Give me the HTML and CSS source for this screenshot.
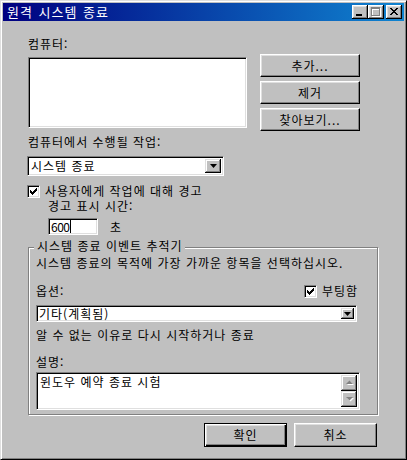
FILE: index.html
```html
<!DOCTYPE html>
<html lang="ko">
  <head>
    <meta charset="UTF-8" />
    <title>원격 시스템 종료</title>
    <link rel="stylesheet" href="styles.css">
  </head>
  <body>
    <div class="window">
      <div class="titlebar">
        <span class="title">원격 시스템 종료</span>
        <div class="caption-buttons">
          <span class="cap-btn">
            <svg width="16" height="14" viewBox="0 0 16 14" shape-rendering="crispEdges">
              <rect x="4" y="9" width="6" height="2" fill="#000" />
            </svg>
          </span>
          <span class="cap-btn">
            <svg width="16" height="14" viewBox="0 0 16 14" shape-rendering="crispEdges">
              <g fill="#fff">
                <rect x="4" y="3" width="9" height="2" />
                <rect x="4" y="3" width="1" height="9" />
                <rect x="12" y="3" width="1" height="9" />
                <rect x="4" y="11" width="9" height="1" />
              </g>
              <g fill="#808080">
                <rect x="3" y="2" width="9" height="2" />
                <rect x="3" y="2" width="1" height="9" />
                <rect x="11" y="2" width="1" height="9" />
                <rect x="3" y="10" width="9" height="1" />
              </g>
            </svg>
          </span>
          <span class="cap-btn close">
            <svg width="16" height="14" viewBox="0 0 16 14" shape-rendering="crispEdges">
              <g fill="#000">
                <rect x="4" y="3" width="2" height="1" /><rect x="10" y="3" width="2" height="1" />
                <rect x="5" y="4" width="2" height="1" /><rect x="9" y="4" width="2" height="1" />
                <rect x="6" y="5" width="4" height="1" />
                <rect x="7" y="6" width="2" height="1" />
                <rect x="6" y="7" width="4" height="1" />
                <rect x="5" y="8" width="2" height="1" /><rect x="9" y="8" width="2" height="1" />
                <rect x="4" y="9" width="2" height="1" /><rect x="10" y="9" width="2" height="1" />
              </g>
            </svg>
          </span>
        </div>
      </div>

      <div class="dialog">
        <div class="computers">
          <div class="computers-left">
            <div class="label">컴퓨터:</div>
            <div class="listbox sunken"></div>
          </div>
          <div class="side-buttons">
            <button class="btn side-btn">추가...</button>
            <button class="btn side-btn">제거</button>
            <button class="btn side-btn">찾아보기...</button>
          </div>
        </div>

        <div class="label action-label">컴퓨터에서 수행될 작업:</div>
        <div class="combo sunken action-combo">
          <span class="combo-text">시스템 종료</span>
          <span class="combo-btn">
            <svg width="7" height="4" viewBox="0 0 7 4"><path d="M0 0h7L3.5 4z" fill="#000" /></svg>
          </span>
        </div>

        <div class="check warn-check">
          <span class="checkbox sunken">
            <svg width="7" height="7" viewBox="0 0 7 7" shape-rendering="crispEdges">
              <g fill="#000">
                <rect x="0" y="2" width="1" height="3" /><rect x="1" y="3" width="1" height="3" />
                <rect x="2" y="4" width="1" height="3" /><rect x="3" y="3" width="1" height="3" />
                <rect x="4" y="2" width="1" height="3" /><rect x="5" y="1" width="1" height="3" />
                <rect x="6" y="0" width="1" height="3" />
              </g>
            </svg>
          </span>
          <span>사용자에게 작업에 대해 경고</span>
        </div>
        <div class="label indent warn-label">경고 표시 시간:</div>
        <div class="indent time-row">
          <span class="edit sunken">600<span class="caret"></span></span>
          <span class="unit">초</span>
        </div>

        <fieldset class="group">
          <legend>시스템 종료 이벤트 추적기</legend>
          <div class="label">시스템 종료의 목적에 가장 가까운 항목을 선택하십시오.</div>
          <div class="options-row">
            <span>옵션:</span>
            <div class="check boot-check">
              <span class="checkbox sunken">
                <svg width="7" height="7" viewBox="0 0 7 7" shape-rendering="crispEdges">
                  <g fill="#000">
                    <rect x="0" y="2" width="1" height="3" /><rect x="1" y="3" width="1" height="3" />
                    <rect x="2" y="4" width="1" height="3" /><rect x="3" y="3" width="1" height="3" />
                    <rect x="4" y="2" width="1" height="3" /><rect x="5" y="1" width="1" height="3" />
                    <rect x="6" y="0" width="1" height="3" />
                  </g>
                </svg>
              </span>
              <span>부팅함</span>
            </div>
          </div>
          <div class="combo sunken reason-combo">
            <span class="combo-text">기타(계획됨)</span>
            <span class="combo-btn">
              <svg width="7" height="4" viewBox="0 0 7 4"><path d="M0 0h7L3.5 4z" fill="#000" /></svg>
            </span>
          </div>
          <div class="label reason-text">알 수 없는 이유로 다시 시작하거나 종료</div>
          <div class="label memo-label">설명:</div>
          <div class="memo sunken">
            <span class="memo-text">윈도우 예약 종료 시험</span>
            <div class="scrollbar">
              <span class="scroll-btn">
                <svg width="9" height="6" viewBox="0 0 9 6">
                  <path d="M2 5h7L5.5 1.5z" fill="#fff" />
                  <path d="M1 4h7L4.5 0.5z" fill="#808080" />
                </svg>
              </span>
              <span class="scroll-track"></span>
              <span class="scroll-btn">
                <svg width="9" height="6" viewBox="0 0 9 6">
                  <path d="M2 2h7L5.5 5.5z" fill="#fff" />
                  <path d="M1 1h7L4.5 4.5z" fill="#808080" />
                </svg>
              </span>
            </div>
          </div>
        </fieldset>

        <div class="dialog-buttons">
          <button class="btn default-btn">확인</button>
          <button class="btn">취소</button>
        </div>
      </div>
    </div>
  </body>
</html>
```

FILE: styles.css
```css
* {
  box-sizing: border-box;
}

body {
  margin: 0;
  font-family: "Noto Sans CJK KR", sans-serif;
  font-size: 12px;
  line-height: 14px;
  letter-spacing: 1px;
  color: #000;
  background: #c0c0c0;
}

.window {
  width: 407px;
  height: 460px;
  padding: 2px;
  background: #c0c0c0;
  border: 1px solid;
  border-color: #dfdfdf #000 #000 #dfdfdf;
  box-shadow: inset 1px 1px #fff, inset -1px -1px #808080;
}

.titlebar {
  height: 18px;
  display: flex;
  align-items: center;
  justify-content: space-between;
  padding: 0 2px 0 4px;
  background: linear-gradient(to right, #000080, #1084d0);
  color: #fff;
}

.title {
  font-size: 13px;
  word-spacing: 1px;
}

.caption-buttons {
  display: flex;
}

.cap-btn {
  width: 16px;
  height: 14px;
  background: #c0c0c0;
  box-shadow: inset -1px -1px #000, inset 1px 1px #fff, inset -2px -2px #808080,
    inset 2px 2px #dfdfdf;
}

.cap-btn svg {
  display: block;
}

.cap-btn.close {
  margin-left: 2px;
}

/* bevels */
.sunken {
  background: #fff;
  border: 1px solid;
  border-color: #808080 #fff #fff #808080;
  box-shadow: inset 1px 1px #000, inset -1px -1px #dfdfdf;
}

.btn {
  font: inherit;
  letter-spacing: inherit;
  color: #000;
  background: #c0c0c0;
  padding: 0;
  border: 1px solid;
  border-color: #fff #000 #000 #fff;
  box-shadow: inset -1px -1px #808080, inset 1px 1px #dfdfdf;
  border-radius: 0;
}

.dialog {
  padding: 0 27px 0 25px;
}

.computers {
  display: flex;
  gap: 13px;
  margin-top: 16px;
}

.listbox {
  width: 219px;
  height: 71px;
  margin-top: 6px;
}

.side-buttons {
  display: flex;
  flex-direction: column;
  gap: 4px;
  padding-top: 17px;
}

.side-btn {
  width: 100px;
  height: 23px;
}

.action-label {
  margin-top: 4px;
}

.combo {
  display: flex;
  align-items: stretch;
  padding: 2px;
}

.combo-text {
  flex: 1;
  padding-left: 1px;
  align-self: center;
}

.combo-btn {
  width: 16px;
  display: flex;
  align-items: center;
  justify-content: center;
  background: #c0c0c0;
  box-shadow: inset -1px -1px #000, inset 1px 1px #dfdfdf, inset -2px -2px #808080,
    inset 2px 2px #fff;
}

.action-combo {
  width: 197px;
  height: 20px;
  margin: 7px 0 0 -1px;
}

.check {
  display: flex;
  align-items: center;
  height: 14px;
}

.checkbox {
  width: 13px;
  height: 13px;
  margin-right: 5px;
  display: flex;
  align-items: center;
  justify-content: center;
}

.warn-check {
  margin: 8px 0 0 -1px;
}

.indent {
  margin-left: 20px;
}

.warn-label {
  margin-top: 1px;
}

.time-row {
  display: flex;
  align-items: center;
  margin-top: 5px;
}

.edit {
  width: 50px;
  height: 17px;
  padding: 0 2px;
  display: flex;
  align-items: center;
  letter-spacing: -0.5px;
}

.caret {
  width: 1px;
  height: 13px;
  margin-left: 1px;
  background: #000;
}

.unit {
  margin-left: 12px;
}

.group {
  margin: 4px 0 0;
  width: 350px;
  padding: 0 7px 4px 7px;
  border: 1px solid #808080;
  box-shadow: 1px 1px #fff, inset 1px 1px #fff;
}

.group legend {
  margin-left: -2px;
  padding: 0 2px 3px 3px;
  background: #c0c0c0;
}

.options-row {
  display: flex;
  align-items: center;
  margin-top: 14px;
}

.boot-check {
  margin-left: auto;
  margin-right: 12px;
}

.reason-combo {
  width: 321px;
  height: 17px;
  margin-top: 7px;
  padding: 2px 2px 2px 1px;
}

.reason-combo .combo-btn {
  width: 13px;
}

.reason-text {
  margin-top: 6px;
}

.memo-label {
  margin-top: 13px;
}

.memo {
  width: 324px;
  height: 38px;
  margin-top: 3px;
  padding: 2px;
  display: flex;
}

.memo-text {
  flex: 1;
  padding-left: 1px;
}

.scrollbar {
  width: 16px;
  display: flex;
  flex-direction: column;
}

.scroll-btn {
  height: 16px;
  display: flex;
  align-items: center;
  justify-content: center;
  background: #c0c0c0;
  box-shadow: inset -1px -1px #000, inset 1px 1px #dfdfdf, inset -2px -2px #808080,
    inset 2px 2px #fff;
}

.scroll-track {
  flex: 1;
  background: repeating-conic-gradient(#fff 0 25%, #c0c0c0 0 50%) 0 0 / 2px 2px;
}

.dialog-buttons {
  display: flex;
  justify-content: flex-end;
  gap: 7px;
  margin-top: 8px;
}

.dialog-buttons .btn {
  width: 83px;
  height: 24px;
}

.dialog-buttons .default-btn {
  border: 1px solid #000;
  box-shadow: inset 1px 1px #fff, inset -1px -1px #000, inset -2px -2px #808080,
    inset 2px 2px #dfdfdf;
}
```
